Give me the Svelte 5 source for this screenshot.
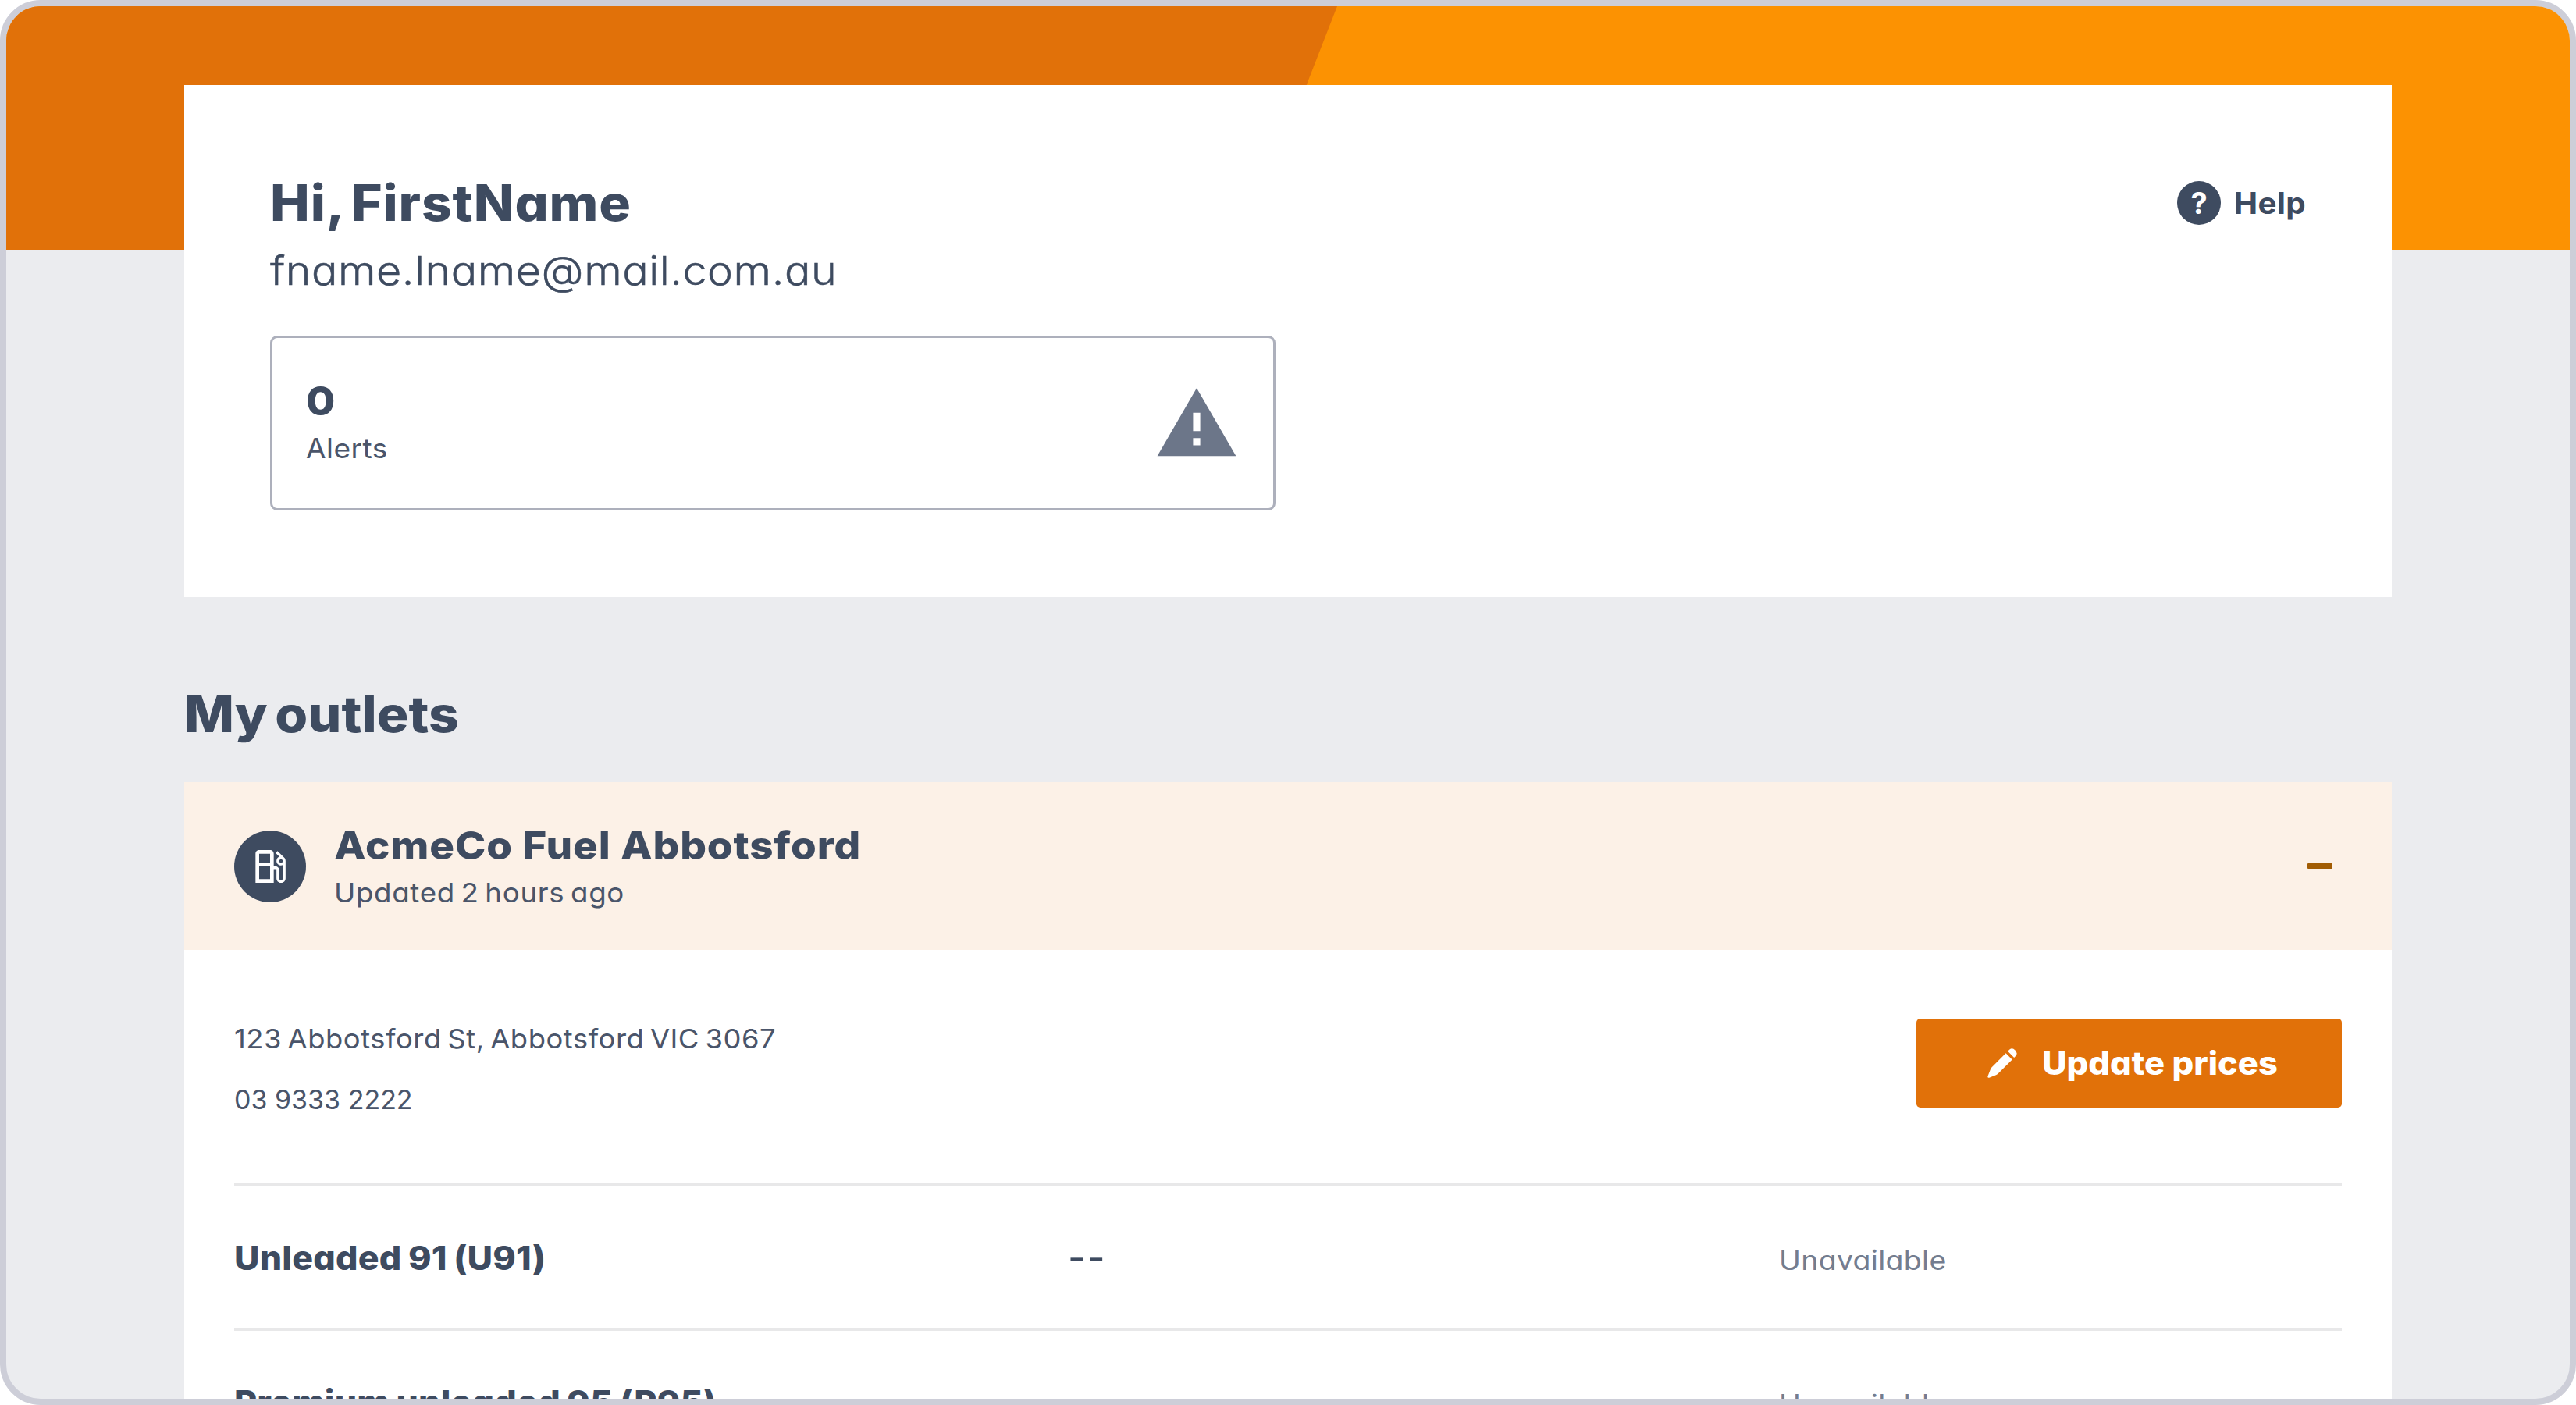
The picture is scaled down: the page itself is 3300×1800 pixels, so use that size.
<script lang="ts">
	type Fuel = { name: string; price: string; status: string };

	const user = { name: 'FirstName', email: 'fname.lname@mail.com.au', alerts: 0 };

	const outlet = {
		name: 'AcmeCo Fuel Abbotsford',
		updated: 'Updated 2 hours ago',
		address: '123 Abbotsford St, Abbotsford VIC 3067',
		phone: '03 9333 2222'
	};

	const fuels: Fuel[] = [
		{ name: 'Unleaded 91 (U91)', price: '--', status: 'Unavailable' },
		{ name: 'Premium unleaded 95 (P95)', price: '', status: 'Unavailable' }
	];

	let open = $state(true);
</script>

<div class="frame">
	<svg class="banner" viewBox="0 0 3284 312" preserveAspectRatio="none" aria-hidden="true">
		<rect width="3284" height="312" fill="#fc9202" />
		<path d="M0 0H1705L1583.5 312H0z" fill="#e17109" />
	</svg>

	<main>
		<section class="profile">
			<div class="top">
				<h1>Hi, {user.name}</h1>
				<a class="help" href="#help"><span class="help-icon">?</span><span class="help-text">Help</span></a>
			</div>
			<p class="email">{user.email}</p>
			<div class="alerts">
				<div>
					<p class="count">{user.alerts}</p>
					<p class="label">Alerts</p>
				</div>
				<svg class="warning" viewBox="0 0 24 24" aria-hidden="true">
					<path d="M1 21h22L12 2 1 21zm12-3h-2v-2h2v2zm0-4h-2V8.9h2V14z" />
				</svg>
			</div>
		</section>

		<h2>My outlets</h2>

		<section class="outlet">
			<button class="outlet-head" aria-label="Toggle outlet" onclick={() => (open = !open)}>
				<span class="pump">
					<svg viewBox="0 0 24 24" aria-hidden="true">
						<path
							d="M19.77 7.23l.01-.01-3.72-3.72L15 4.56l2.11 2.11c-.94.36-1.61 1.26-1.61 2.33 0 1.38 1.12 2.5 2.5 2.5.36 0 .69-.08 1-.21v7.21c0 .55-.45 1-1 1s-1-.45-1-1V14c0-1.1-.9-2-2-2h-1V5c0-1.1-.9-2-2-2H6c-1.1 0-2 .9-2 2v16h10v-7.5h1.5v5c0 1.38 1.12 2.5 2.5 2.5s2.5-1.12 2.5-2.5V9c0-.69-.28-1.32-.73-1.77zM12 19H6v-7h6v7zm0-9H6V5h6v5zm6 0c-.55 0-1-.45-1-1s.45-1 1-1 1 .45 1 1-.45 1-1 1z"
						/>
					</svg>
				</span>
				<span class="outlet-title">
					<span class="outlet-name">{outlet.name}</span>
					<span class="updated">{outlet.updated}</span>
				</span>
				<span class="minus"></span>
			</button>

			{#if open}
				<div class="outlet-body">
					<div class="details">
						<div class="contact">
							<p class="address">{outlet.address}</p>
							<p class="phone">{outlet.phone}</p>
						</div>
						<button class="update">
							<svg viewBox="0 0 38 38" aria-hidden="true">
								<path
									d="M23.6 6.3 31.7 14.4 13.6 32.5Q12.5 33.6 11 34.2L2.3 37.7Q.2 38.2.4 36.1L3.9 27Q4.4 25.6 5.4 24.5z"
								/>
								<path d="M26.1 3.8 28.4 1.6Q31.8-1.4 35.3 2.2 39.3 6 36.5 9.5L34.2 11.9z" />
							</svg>
							<span class="update-text">Update prices</span>
						</button>
					</div>

					{#each fuels as fuel (fuel.name)}
						<div class="fuel">
							<span class="fuel-name">{fuel.name}</span>
							<span class="price">{fuel.price}</span>
							<span class="status">{fuel.status}</span>
						</div>
					{/each}
				</div>
			{/if}
		</section>
	</main>
</div>

<style>
	:global(body) {
		background: #fff;
	}
	.frame {
		--ink: #3e4b60;
		--ink-soft: #4a556a;
		--orange: #e17109;
		position: relative;
		box-sizing: border-box;
		width: 3300px;
		height: 1800px;
		overflow: hidden;
		border: 8px solid #cdced8;
		border-radius: 52px;
		background: #ebecef;
		color: var(--ink);
		font-family: Inter, 'Liberation Sans', sans-serif;
		font-feature-settings: 'cv11';
	}
	.banner {
		position: absolute;
		inset: 0 0 auto;
		width: 100%;
		height: 312px;
	}
	main {
		position: relative;
		width: 2828px;
		margin: 0 auto;
		padding-top: 100.5px;
	}
	h1,
	h2,
	p {
		margin: 0;
		white-space: nowrap;
	}
	h1,
	h2 {
		font-size: 64px;
		font-weight: 800;
		line-height: 80px;
	}
	button {
		border: 0;
		color: inherit;
		font: inherit;
		font-feature-settings: inherit;
		text-align: left;
	}

	h1,
	h2,
	.email,
	.count,
	.label,
	.help-text,
	.outlet-name,
	.updated,
	.address,
	.update-text,
	.fuel-name,
	.status {
		transform: scaleX(var(--wide, 1.06));
		transform-origin: 0 50%;
	}

	.profile {
		box-sizing: border-box;
		height: 656px;
		padding: 111px 110px 0;
		background: #fff;
	}
	.top {
		display: flex;
		align-items: center;
		justify-content: space-between;
	}
	h1 {
		letter-spacing: 0.8px;
		word-spacing: -5px;
	}
	.help {
		display: flex;
		align-items: center;
		gap: 17px;
		margin-right: 5px;
		color: inherit;
		font-size: 38px;
		font-weight: 700;
		text-decoration: none;
	}
	.help-icon {
		width: 56px;
		border-radius: 50%;
		background: var(--ink);
		color: #fff;
		line-height: 56px;
		text-align: center;
	}
	.help-text {
		letter-spacing: 0.4px;
	}
	.email {
		--wide: 1.09;
		margin-top: 12px;
		font-size: 51px;
		font-weight: 300;
		letter-spacing: 0.5px;
		line-height: 70px;
		-webkit-text-stroke: 0.5px currentColor;
	}
	.alerts {
		display: flex;
		align-items: center;
		justify-content: space-between;
		box-sizing: border-box;
		width: 1288px;
		height: 224px;
		margin-top: 48px;
		padding: 2px 43px 0;
		border: 3px solid #adb0bc;
		border-radius: 9px;
	}
	.count {
		font-size: 51px;
		font-weight: 800;
		line-height: 56px;
	}
	.label {
		margin-top: 7px;
		color: var(--ink-soft);
		font-size: 35px;
		letter-spacing: 0.4px;
		line-height: 50px;
	}
	.warning {
		width: 110px;
		height: 110px;
		fill: #6c7689;
	}

	h2 {
		margin: 110px 0 47.5px;
		letter-spacing: 0;
		word-spacing: -5px;
	}

	.outlet {
		background: #fff;
	}
	.outlet-head {
		display: flex;
		align-items: center;
		box-sizing: border-box;
		width: 100%;
		height: 215px;
		padding: 0 76px 0 64px;
		background: #fcf1e7;
	}
	.pump {
		display: grid;
		place-items: center;
		width: 92px;
		height: 92px;
		border-radius: 50%;
		background: var(--ink);
	}
	.pump svg {
		width: 56px;
		height: 56px;
		fill: #fff;
	}
	.outlet-title {
		display: grid;
		flex: 1;
		gap: 8px;
		margin-left: 36px;
	}
	.outlet-name {
		font-size: 50px;
		font-weight: 800;
		letter-spacing: 0.8px;
		line-height: 60px;
	}
	.updated {
		--wide: 1.08;
		color: var(--ink-soft);
		font-size: 34px;
		letter-spacing: 0.6px;
		line-height: 46px;
		word-spacing: -3px;
	}
	.minus {
		width: 32px;
		height: 7px;
		border-radius: 1px;
		background: #a15c03;
	}

	.outlet-body {
		padding: 0 64px;
	}
	.details {
		display: flex;
		align-items: flex-start;
		justify-content: space-between;
		box-sizing: border-box;
		height: 299px;
		padding-top: 88px;
	}
	.contact {
		display: grid;
		gap: 30px;
		padding-top: 2px;
		color: var(--ink-soft);
		font-size: 34px;
		line-height: 48px;
	}
	.address {
		--wide: 1.07;
		letter-spacing: 0.5px;
		word-spacing: -3px;
	}
	.update {
		display: flex;
		align-items: center;
		gap: 32px;
		box-sizing: border-box;
		width: 545px;
		height: 114px;
		padding: 0 0 0 91px;
		border-radius: 5px;
		background: var(--orange);
		color: #fff;
		font-size: 41px;
		font-weight: 800;
		white-space: nowrap;
	}
	.update svg {
		width: 38px;
		height: 38px;
		fill: #fff;
	}
	.update-text {
		letter-spacing: 0;
	}

	.fuel {
		display: grid;
		grid-template-columns: 1068px 911px 1fr;
		align-items: center;
		box-sizing: border-box;
		height: 185px;
		border-top: 4px solid #e8e8e9;
	}
	.fuel-name {
		--wide: 1.04;
		font-size: 43px;
		font-weight: 800;
		letter-spacing: 0.2px;
		word-spacing: -1.5px;
	}
	.price {
		font-size: 50px;
		font-weight: 500;
		letter-spacing: 1.5px;
	}
	.status {
		--wide: 1.07;
		padding-top: 7px;
		color: #747d8f;
		font-size: 35px;
		letter-spacing: 0.3px;
	}
</style>
